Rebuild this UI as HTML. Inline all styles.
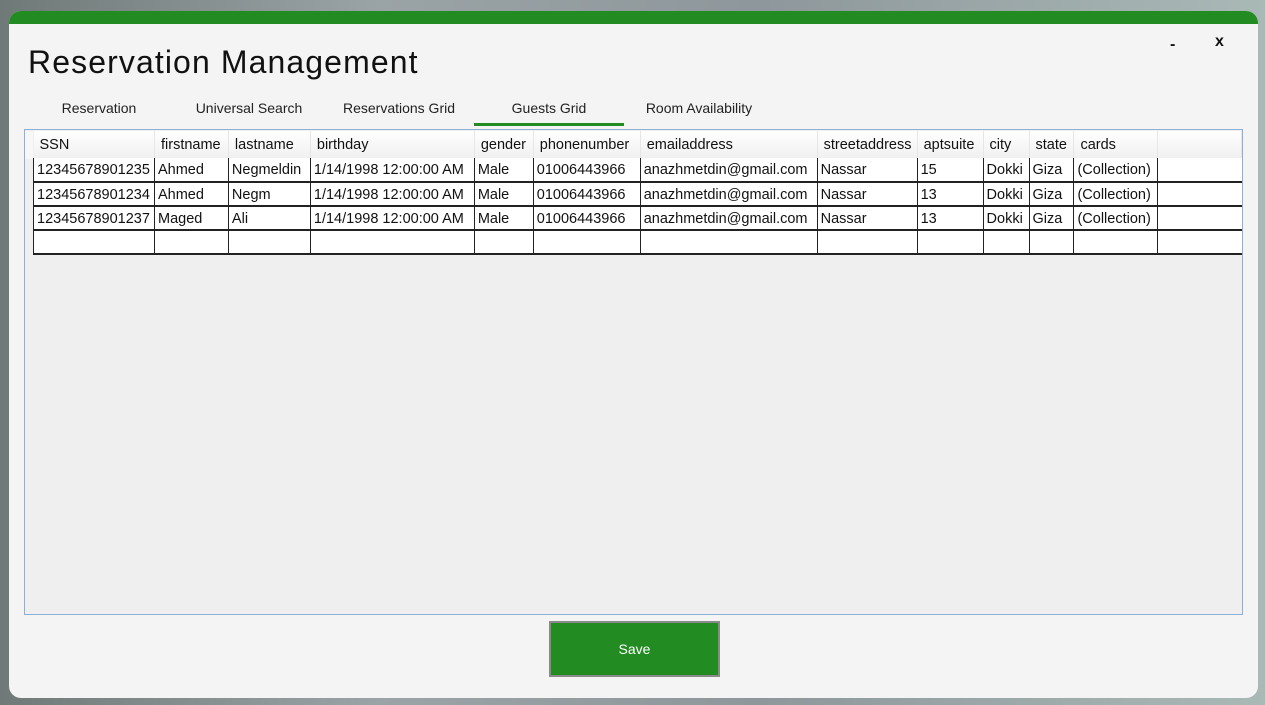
<!DOCTYPE html>
<html><head><meta charset="utf-8"><style>
*{margin:0;padding:0;box-sizing:border-box}
body{width:1265px;height:705px;overflow:hidden;background:linear-gradient(90deg,#6f7a78 0%,#9aa3a6 30%,#8e979b 60%,#a9b9b6 100%);font-family:"Liberation Sans",sans-serif;position:relative}
.win{position:absolute;left:9px;top:11px;width:1249px;height:687px;background:#f4f4f4;border-radius:12px;overflow:hidden}
.bar{position:absolute;left:0;top:0;width:100%;height:13px;background:#228b22}
.title{position:absolute;left:19px;top:33px;font-size:32px;color:#111;letter-spacing:1.1px}
.ctl{position:absolute;top:25px;font-weight:bold;font-size:16px;color:#111}
.tab{position:absolute;top:89px;width:150px;text-align:center;font-size:14px;color:#222}
.grid{position:absolute;left:15px;top:118px;width:1219px;height:486px;border:1px solid #8fb0d6;background:#efefef}
table{position:absolute;left:8px;top:1px;border-collapse:collapse;table-layout:fixed;font-size:14.5px;color:#111}
td{white-space:nowrap;overflow:hidden;padding:1px 3px 0;height:24px;border-left:1px solid #222;border-bottom:2px solid #222;background:#fff}
tr.h td{height:27px;border:none;border-right:1px solid #e6e6e6;background:linear-gradient(#fff,#f0f0f0);padding:0 0 0 6px}
.rh{position:absolute;left:0;top:1px;width:8px;height:28px;background:#f7f7f7}
.save{position:absolute;left:540px;top:610px;width:171px;height:56px;background:#228b22;border:2px solid #8a8a8a;color:#fff;font-size:14px;text-align:center;line-height:52px}
</style></head><body>
<div class="win">
<div class="bar"></div>
<div class="title">Reservation Management</div>
<div class="ctl" style="left:1161px">-</div>
<div class="ctl" style="left:1206px;top:22px">x</div>
<div class="tab" style="left:15px">Reservation</div>
<div class="tab" style="left:165px">Universal Search</div>
<div class="tab" style="left:315px">Reservations Grid</div>
<div class="tab" style="left:465px">Guests Grid</div>
<div style="position:absolute;left:465px;top:112px;width:150px;height:3px;background:#228b22"></div>
<div class="tab" style="left:615px">Room Availability</div>
<div class="grid">
<div class="rh"></div>
<table>
<colgroup><col style="width:121px"><col style="width:74px"><col style="width:82px"><col style="width:164px"><col style="width:59px"><col style="width:107px"><col style="width:177px"><col style="width:100px"><col style="width:66px"><col style="width:46px"><col style="width:45px"><col style="width:84px"><col style="width:84px"></colgroup>
<tr class="h"><td>SSN</td><td>firstname</td><td>lastname</td><td>birthday</td><td>gender</td><td>phonenumber</td><td>emailaddress</td><td>streetaddress</td><td>aptsuite</td><td>city</td><td>state</td><td>cards</td><td></td></tr>
<tr><td>12345678901235</td><td>Ahmed</td><td>Negmeldin</td><td>1/14/1998 12:00:00 AM</td><td>Male</td><td>01006443966</td><td>anazhmetdin@gmail.com</td><td>Nassar</td><td>15</td><td>Dokki</td><td>Giza</td><td>(Collection)</td><td></td></tr>
<tr><td>12345678901234</td><td>Ahmed</td><td>Negm</td><td>1/14/1998 12:00:00 AM</td><td>Male</td><td>01006443966</td><td>anazhmetdin@gmail.com</td><td>Nassar</td><td>13</td><td>Dokki</td><td>Giza</td><td>(Collection)</td><td></td></tr>
<tr><td>12345678901237</td><td>Maged</td><td>Ali</td><td>1/14/1998 12:00:00 AM</td><td>Male</td><td>01006443966</td><td>anazhmetdin@gmail.com</td><td>Nassar</td><td>13</td><td>Dokki</td><td>Giza</td><td>(Collection)</td><td></td></tr>
<tr><td></td><td></td><td></td><td></td><td></td><td></td><td></td><td></td><td></td><td></td><td></td><td></td><td></td></tr>
</table>
</div>
<div class="save">Save</div>
</div>
</body></html>
